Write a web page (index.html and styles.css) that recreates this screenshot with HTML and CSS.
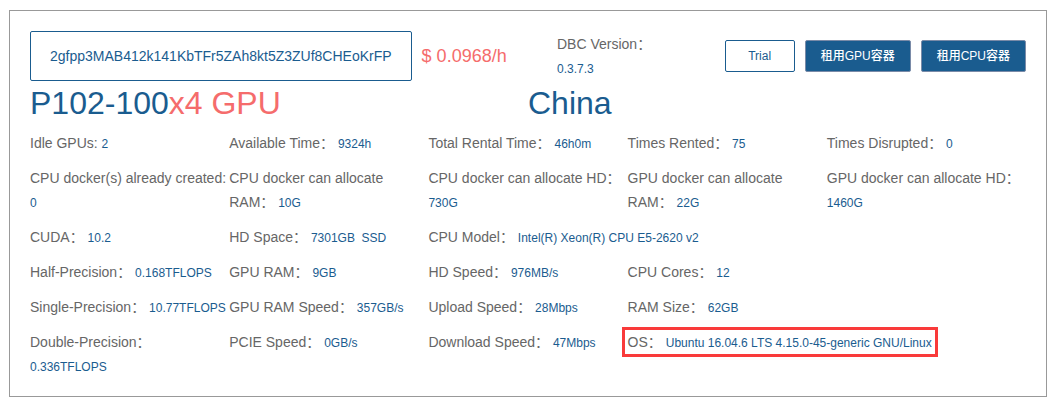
FILE: index.html
```html
<!DOCTYPE html>
<html lang="en">
<head>
<meta charset="utf-8">
<title>P102-100 x4 GPU</title>
<link rel="stylesheet" href="styles.css">
</head>
<body>
<main class="machine">
  <header class="head">
    <div class="identity">
      <button type="button" class="btn btn-id">2gfpp3MAB412k141KbTFr5ZAh8kt5Z3ZUf8CHEoKrFP</button>
      <span class="price">$ 0.0968/h</span>
    </div>
    <div class="side">
      <div class="version">DBC Version： <span class="value">0.3.7.3</span></div>
      <div class="actions">
        <button type="button" class="btn">Trial</button>
        <button type="button" class="btn btn-primary">租用GPU容器</button>
        <button type="button" class="btn btn-primary">租用CPU容器</button>
      </div>
    </div>
  </header>
  <div class="titles">
    <h1 class="title">P102-100<span class="count">x4 GPU</span></h1>
    <h2 class="title">China</h2>
  </div>
  <section class="specs">
    <div>Idle GPUs: <span class="value">2</span></div>
    <div>Available Time： <span class="value">9324h</span></div>
    <div>Total Rental Time： <span class="value">46h0m</span></div>
    <div>Times Rented： <span class="value">75</span></div>
    <div>Times Disrupted： <span class="value">0</span></div>

    <div>CPU docker(s) already created: <span class="value">0</span></div>
    <div>CPU docker can allocate RAM： <span class="value">10G</span></div>
    <div>CPU docker can allocate HD： <span class="value">730G</span></div>
    <div>GPU docker can allocate RAM： <span class="value">22G</span></div>
    <div>GPU docker can allocate HD： <span class="value">1460G</span></div>

    <div class="first">CUDA： <span class="value">10.2</span></div>
    <div>HD Space： <span class="value">7301GB&nbsp; SSD</span></div>
    <div class="wide">CPU Model： <span class="value">Intel(R) Xeon(R) CPU E5-2620 v2</span></div>

    <div class="first">Half-Precision： <span class="value">0.168TFLOPS</span></div>
    <div>GPU RAM： <span class="value">9GB</span></div>
    <div>HD Speed： <span class="value">976MB/s</span></div>
    <div>CPU Cores： <span class="value">12</span></div>

    <div class="first">Single-Precision： <span class="value">10.77TFLOPS</span></div>
    <div>GPU RAM Speed： <span class="value">357GB/s</span></div>
    <div>Upload Speed： <span class="value">28Mbps</span></div>
    <div>RAM Size： <span class="value">62GB</span></div>

    <div class="first">Double-Precision： <span class="value">0.336TFLOPS</span></div>
    <div>PCIE Speed： <span class="value">0GB/s</span></div>
    <div>Download Speed： <span class="value">47Mbps</span></div>
    <div class="wide"><span class="marked">OS： <span class="value">Ubuntu 16.04.6 LTS 4.15.0-45-generic GNU/Linux</span></span></div>
  </section>
</main>
</body>
</html>
```
FILE: styles.css
```css
* {
  box-sizing: border-box;
}

body {
  margin: 0;
  padding: 10px 11px 8px 9px;
  background: #fff;
  color: #666;
  font: 14px/24px "Liberation Sans", Arial, "Noto Sans CJK SC", sans-serif;
}

.machine {
  padding: 20px 20px 18px;
  border: 1px solid #999;
}

.head,
.titles {
  display: grid;
  grid-template-columns: 1fr 1fr;
  align-items: center;
}

.identity,
.side,
.actions {
  display: flex;
  align-items: center;
  gap: 10px;
}

.side {
  justify-content: space-between;
  padding-left: 29px;
}

.version {
  width: 100px;
}

.price {
  color: #f56c6c;
  font-size: 18px;
  white-space: nowrap;
}

.btn {
  height: 32px;
  padding: 0 15px;
  min-width: 70px;
  border: 1px solid #1a5c8f;
  border-radius: 2px;
  background: #fff;
  color: #1a5c8f;
  font: inherit;
  font-size: 12px;
  white-space: nowrap;
  cursor: pointer;
}

.btn-id {
  height: 50px;
  padding: 0 19px;
  font-size: 14px;
}

.btn-primary {
  border-color: #7a8ba8;
  background: #1a5c8f;
  color: #fff;
  font-weight: 500;
}

.title {
  margin: 0;
  color: #1a5c8f;
  font-size: 32px;
  font-weight: 400;
  line-height: 44px;
}

.count {
  color: #f56c6c;
}

.specs {
  display: grid;
  grid-template-columns: repeat(5, minmax(0, 1fr));
  row-gap: 11px;
  padding-top: 6px;
}

.first {
  grid-column: 1;
}

.wide {
  grid-column: span 2;
}

.value {
  color: #1a5c8f;
  font-size: 12px;
  line-height: 1;
}

.marked {
  position: relative;
}

/* Red frame drawn round the operating system entry */
.marked::after {
  content: "";
  position: absolute;
  inset: -7px -6px;
  border: 3px solid #f93a3a;
}
```
